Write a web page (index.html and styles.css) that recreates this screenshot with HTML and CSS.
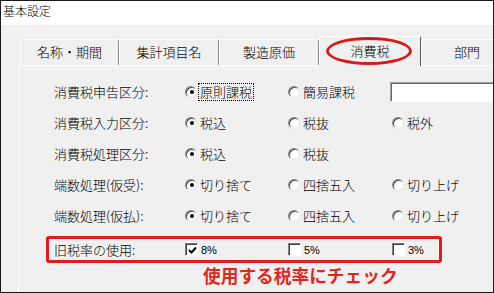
FILE: index.html
```html
<!DOCTYPE html>
<html lang="ja">
<head>
<meta charset="utf-8">
<title>基本設定</title>
<link rel="stylesheet" href="styles.css">
</head>
<body>
<div class="window">
  <div class="titlebar">基本設定</div>
  <div class="tabrow">
    <div class="tab t1">名称・期間</div>
    <div class="tab t2">集計項目名</div>
    <div class="tab t3">製造原価</div>
    <div class="tab selected">消費税<span class="ellipse"></span></div>
    <div class="tab t5">部門</div>
  </div>
  <div class="panel">
    <div class="row">
      <span class="label">消費税申告区分:</span>
      <span class="opt"><span class="radio on"></span><span class="focus">原則課税</span></span>
      <span class="opt"><span class="radio"></span><span>簡易課税</span></span>
      <span class="opt"><span class="textbox"></span></span>
    </div>
    <div class="row">
      <span class="label">消費税入力区分:</span>
      <span class="opt"><span class="radio on"></span><span>税込</span></span>
      <span class="opt"><span class="radio"></span><span>税抜</span></span>
      <span class="opt"><span class="radio"></span><span>税外</span></span>
    </div>
    <div class="row">
      <span class="label">消費税処理区分:</span>
      <span class="opt"><span class="radio on"></span><span>税込</span></span>
      <span class="opt"><span class="radio"></span><span>税抜</span></span>
    </div>
    <div class="row">
      <span class="label">端数処理(仮受):</span>
      <span class="opt"><span class="radio on"></span><span>切り捨て</span></span>
      <span class="opt"><span class="radio"></span><span>四捨五入</span></span>
      <span class="opt"><span class="radio"></span><span>切り上げ</span></span>
    </div>
    <div class="row">
      <span class="label">端数処理(仮払):</span>
      <span class="opt"><span class="radio on"></span><span>切り捨て</span></span>
      <span class="opt"><span class="radio"></span><span>四捨五入</span></span>
      <span class="opt"><span class="radio"></span><span>切り上げ</span></span>
    </div>
    <div class="row highlight">
      <span class="label">旧税率の使用:</span>
      <span class="opt"><span class="check on"><svg width="9" height="9" viewBox="0 0 9 9"><path d="M1 4 L3.5 6.5 L8 1.5" fill="none" stroke="#000" stroke-width="2"/></svg></span><span class="pct">8%</span></span>
      <span class="opt"><span class="check"></span><span class="pct">5%</span></span>
      <span class="opt"><span class="check"></span><span class="pct">3%</span></span>
    </div>
    <div class="note">使用する税率にチェック</div>
  </div>
</div>
</body>
</html>
```
FILE: styles.css
```css
* { box-sizing: border-box; }
html, body { margin: 0; padding: 0; }
body {
  width: 494px;
  height: 293px;
  overflow: hidden;
  font-family: "Noto Sans CJK JP", "Noto Sans", sans-serif;
  font-size: 13px;
  font-weight: 300;
  color: #000;
  background: #fff;
}
.window {
  width: 494px;
  height: 293px;
  border: 1px solid #1a1a1a;
  background: #f0f0f0;
  overflow: hidden;
  display: flex;
  flex-direction: column;
}
.titlebar {
  height: 24px;
  flex: none;
  background: #fff;
  font-size: 12px;
  line-height: 16px;
  padding: 2px 0 0 2px;
}
.tabrow {
  flex: none;
  display: flex;
  align-items: flex-end;
  height: 29px;
  margin: 11px 0 0 19px;
  position: relative;
  z-index: 2;
}
.tab {
  flex: none;
  height: 26px;
  line-height: 24px;
  text-align: center;
  border-top: 1px solid #fff;
  border-left: 1px solid #fff;
  border-right: 1px solid #8a8a8a;
  border-radius: 2px 2px 0 0;
  background: #f0f0f0;
  white-space: nowrap;
}
.t1 { width: 99px; }
.t2 { width: 100px; }
.t3 { width: 100px; }
.t5 { width: 92px; }
.tab.selected {
  width: 102px;
  height: 30px;
  margin-bottom: -1px;
  line-height: 28px;
  position: relative;
  border-right: 1px solid #555;
  padding-bottom: 2px;
}
.ellipse {
  position: absolute;
  left: 6px;
  top: 0;
  width: 86px;
  height: 28px;
  border: 3px solid #d41a1a;
  border-radius: 50%;
}
.panel {
  flex: 1;
  margin-left: 17px;
  border-top: 1px solid #fff;
  border-left: 1px solid #fff;
  padding: 10px 0 0 27px;
  position: relative;
  z-index: 1;
}
.row {
  width: 396px;
  height: 31px;
  border: 3px solid transparent;
  border-radius: 3px;
  padding-left: 5px;
  display: grid;
  grid-template-columns: 131px 103px 104px 1fr;
  align-items: center;
  white-space: nowrap;
}
.row.highlight {
  height: 27px;
  margin-top: 5px;
  border-color: #e31b1b;
}
.label { line-height: 16px; }
.opt {
  display: flex;
  align-items: center;
  gap: 3px;
  line-height: 16px;
}
.radio {
  flex: none;
  width: 12px;
  height: 12px;
  border-radius: 50%;
  background: #fff;
  border: 1px solid;
  border-color: #808080 #e6e6e6 #e6e6e6 #808080;
  box-shadow: inset 1px 1px 0 #505050;
  display: flex;
  align-items: center;
  justify-content: center;
}
.radio.on::after {
  content: "";
  width: 4px;
  height: 4px;
  border-radius: 50%;
  background: #000;
  margin: 1px 0 0 1px;
}
.focus {
  outline: 1px dotted #000;
  outline-offset: 0;
  padding: 0 1px;
  margin-left: -1px;
}
.check {
  flex: none;
  width: 13px;
  height: 13px;
  background: #fff;
  border: 1px solid;
  border-color: #808080 #fff #fff #808080;
  box-shadow: inset 1px 1px 0 #404040;
  display: flex;
  align-items: center;
  justify-content: center;
  padding: 1px 0 0 1px;
}
.pct {
  font-family: "Liberation Sans", Arial, sans-serif;
  font-size: 11px;
  font-weight: 400;
}
.textbox {
  display: block;
  width: 112px;
  height: 20px;
  margin-left: -2px;
  background: #fff;
  border: 1px solid;
  border-color: #a0a0a0 #fff #fff #a0a0a0;
  box-shadow: inset 1px 1px 0 #696969;
}
.note {
  margin: 3px 0 0 157px;
  color: #e3261c;
  font-weight: bold;
  font-size: 17.7px;
  line-height: 18px;
  white-space: nowrap;
}
```
